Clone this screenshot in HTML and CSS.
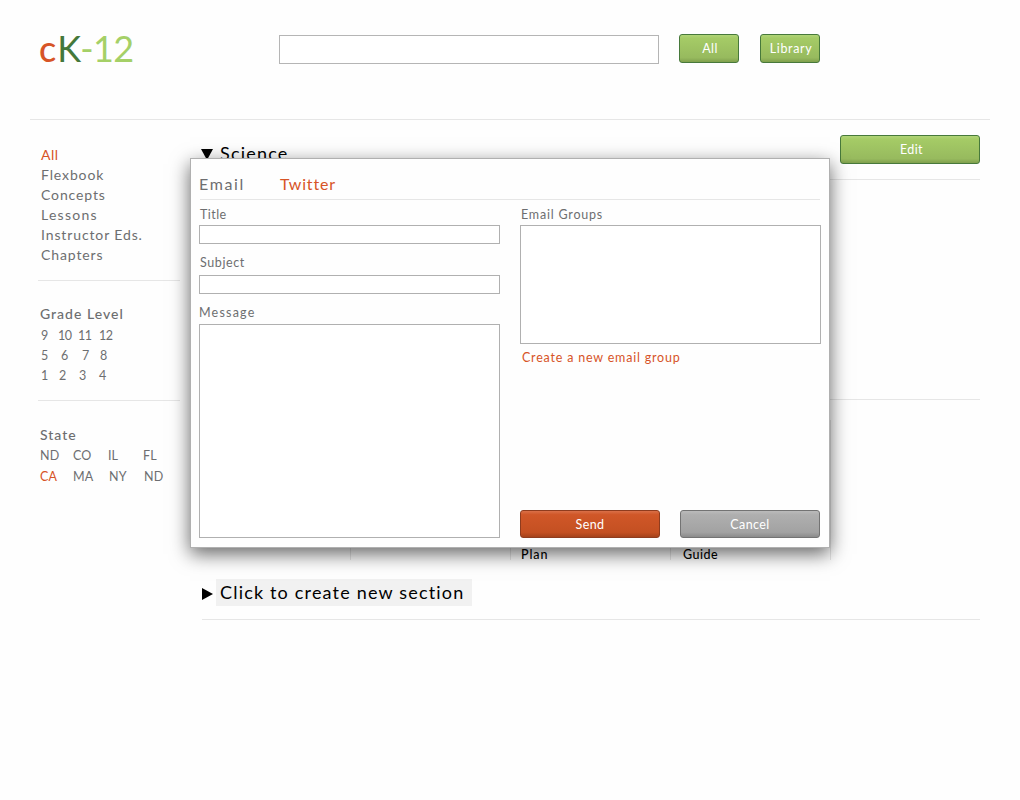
FILE: index.html
```html
<!DOCTYPE html>
<html lang="en">
<head>
<meta charset="utf-8">
<title>cK-12</title>
<link rel="stylesheet" href="styles.css">
</head>
<body>
<header class="header">
  <div class="logo"><span class="logo-c">c</span><span class="logo-k">K</span><span class="logo-num">-12</span></div>
  <input class="search" type="text" aria-label="Search">
  <button class="btn btn-small">All</button>
  <button class="btn btn-small btn-library">Library</button>
</header>
<div class="layout">
  <aside class="sidebar">
    <nav class="types">
      <a class="active">All</a>
      <a>Flexbook</a>
      <a>Concepts</a>
      <a class="wide">Lessons</a>
      <a>Instructor Eds.</a>
      <a>Chapters</a>
    </nav>
    <section class="grades">
      <h3>Grade Level</h3>
      <div class="row row-a"><span>9</span><span>10</span><span>11</span><span>12</span></div>
      <div class="row row-b"><span>5</span><span>6</span><span>7</span><span>8</span></div>
      <div class="row row-c"><span>1</span><span>2</span><span>3</span><span>4</span></div>
    </section>
    <section class="states">
      <h3>State</h3>
      <div class="row"><span>ND</span><span>CO</span><span>IL</span><span>FL</span></div>
      <div class="row row-last"><span class="active">CA</span><span>MA</span><span>NY</span><span>ND</span></div>
    </section>
  </aside>
  <main class="main">
    <div class="section-head">
      <svg class="arrow" width="12" height="11" viewBox="0 0 12 11"><path d="M0 0H12L6 11Z"/></svg>
      <h2>Science</h2>
      <button class="btn btn-edit">Edit</button>
    </div>
    <div class="shelf"></div>
    <div class="books">
      <div class="book"></div>
      <div class="book"></div>
      <div class="book">Plan</div>
      <div class="book">Guide</div>
    </div>
    <div class="new-section">
      <svg class="arrow-right" width="11" height="12" viewBox="0 0 11 12"><path d="M0 0L11 6L0 12Z"/></svg>
      <h2 class="new-title">Click to create new section</h2>
    </div>
  </main>
</div>
<div class="dialog" role="dialog">
  <div class="tabs"><a class="tab-email">Email</a><a class="tab-twitter">Twitter</a></div>
  <div class="form">
    <div class="col">
      <label class="label-title">Title</label>
      <input class="field" type="text" aria-label="Title">
      <label class="label-subject">Subject</label>
      <input class="field" type="text" aria-label="Subject">
      <label class="label-message">Message</label>
      <textarea class="field message" aria-label="Message"></textarea>
    </div>
    <div class="col">
      <label class="label-groups">Email Groups</label>
      <div class="field groups"></div>
      <a class="create">Create a new email group</a>
      <div class="actions">
        <button class="btn btn-send">Send</button>
        <button class="btn btn-cancel">Cancel</button>
      </div>
    </div>
  </div>
</div>
</body>
</html>
```
FILE: styles.css
```css
* { box-sizing: border-box; }
body {
  margin: 0;
  height: 800px;
  overflow: hidden;
  background: #fefefe;
  color: #6d6e70;
  font-family: Lato, "Liberation Sans", sans-serif;
}
h2, h3 { margin: 0; font-weight: 400; }
.header {
  display: flex;
  align-items: flex-start;
  height: 120px;
  margin: 0 30px;
  padding-top: 34px;
  border-bottom: 1px solid #e6e6e6;
}
.logo {
  width: 249px;
  padding-left: 9px;
  margin-top: -8px;
  font-size: 36px;
  line-height: 44px;
  white-space: nowrap;
}
.logo-c { color: #d75427; letter-spacing: 1px; font-weight: 500; }
.logo-k { color: #44783a; letter-spacing: -0.8px; }
.logo-num { color: #a5d067; letter-spacing: -0.7px; }
.search {
  width: 380px;
  height: 29px;
  margin: 0.5px 20px 0 0;
  padding: 0 8px;
  border: 1px solid #b5b5b5;
  background: #fff;
}
.btn {
  height: 29px;
  padding: 1px 0 0;
  border: 1px solid #47793b;
  border-radius: 3px;
  background: linear-gradient(#b0d477 0, #a5cb66 12%, #97ba5e 84%, #80a04d 100%);
  color: #fff;
  font: 400 12.5px/20px Lato, "Liberation Sans", sans-serif;
  letter-spacing: 0.4px;
}
.btn-small { width: 60px; margin-right: 21px; padding-left: 2px; }
.btn-library { margin-right: 0; letter-spacing: 0.65px; }
.layout { display: flex; }
.sidebar { width: 142px; margin-left: 38px; }
.active { color: #d75427; }
.types {
  display: flex;
  flex-direction: column;
  height: 161px;
  padding: 25px 0 0 3px;
  border-bottom: 1px solid #e6e6e6;
  font-size: 14px;
  line-height: 20px;
  letter-spacing: 0.88px;
}
.types .active { letter-spacing: 0.5px; }
.types .wide { letter-spacing: 1.25px; }
.sidebar h3 {
  padding-left: 2px;
  font-size: 14px;
  font-weight: 500;
  line-height: 20px;
  letter-spacing: 1px;
}
.grades { height: 120px; padding-top: 23px; border-bottom: 1px solid #e6e6e6; }
.row {
  display: grid;
  padding-left: 2px;
  grid-template-columns: 33px 35px 35px 30px;
  font-size: 12.5px;
  line-height: 20px;
  letter-spacing: 0.1px;
}
.grades .row { padding-left: 3px; letter-spacing: -0.6px; }
.grades h3 { margin-bottom: 2px; }
.grades .row-a { grid-template-columns: 17px 20px 21px 20px; }
.grades .row-b { grid-template-columns: 20px 21px 18px 20px; }
.grades .row-c { grid-template-columns: 18px 20px 20px 20px; }
.states { padding-top: 24px; }
.states h3 { margin: 0 0 1px; }
.states .row-last { grid-template-columns: 33px 36px 35px 30px; margin-top: 1px; }
.main { width: 778px; margin-left: 22px; color: #000; }
.section-head {
  display: flex;
  height: 60px;
  border-bottom: 1px solid #e6e6e6;
}
.arrow { flex: none; margin: 29px 7px 0 -1px; }
.section-head h2 { flex: 1; padding-top: 21px; font-size: 18px; line-height: 24px; letter-spacing: 1.2px; }
.btn-edit { width: 140px; margin-top: 15px; padding-left: 3px; }
.shelf { height: 220px; border-bottom: 1px solid #e6e6e6; }
.books { display: flex; height: 140px; margin: 20px 0 0 -11px; }
.book {
  display: flex;
  align-items: flex-end;
  width: 160px;
  padding-left: 10px;
  border-right: 1px solid #e6e6e6;
  font-size: 12.5px;
  font-weight: 500;
  line-height: 11px;
  letter-spacing: 0.9px;
}
.book:last-child { padding-left: 12px; letter-spacing: 0.5px; }
.new-section {
  display: flex;
  height: 60px;
  padding-top: 19px;
  border-bottom: 1px solid #e6e6e6;
}
.arrow-right { flex: none; margin: 9px 3px 0 0; }
.new-title {
  width: 256px;
  height: 27px;
  padding-left: 4px;
  background: #f1f1f1;
  font-size: 18px;
  line-height: 26px;
  letter-spacing: 1.18px;
  white-space: nowrap;
}
.dialog {
  position: absolute;
  left: 190px;
  top: 158px;
  width: 640px;
  height: 390px;
  padding: 0 8px;
  border: 1px solid #b0b0b0;
  background: #fefefe;
  box-shadow: 0 6px 18px rgba(0, 0, 0, 0.6);
}
.tabs {
  display: flex;
  height: 41px;
  margin: 0 1px;
  padding-top: 15px;
  border-bottom: 1px solid #e6e6e6;
  font-size: 16px;
  line-height: 20px;
}
.tab-email { width: 79px; margin-left: -1px; letter-spacing: 1.65px; }
.tab-twitter { color: #d75427; letter-spacing: 0.8px; margin-left: 2px; }
.form { display: flex; gap: 20px; }
.col {
  display: flex;
  flex-direction: column;
  width: 301px;
  height: 338px;
  font-size: 12.5px;
  line-height: 20px;
}
.field {
  display: block;
  flex: none;
  width: 301px;
  height: 19px;
  padding: 0 4px;
  border: 1px solid #b0b0b0;
  border-radius: 0;
  background: #fff;
  resize: none;
}
.label-title { height: 25px; padding: 5px 0 0 1px; letter-spacing: 0.45px; }
.label-subject { height: 31px; padding: 9px 0 0 1px; letter-spacing: 0.6px; }
.label-message { height: 30px; padding-top: 9px; letter-spacing: 1.2px; }
.label-groups { height: 25px; padding: 5px 0 0 1px; letter-spacing: 0.8px; }
.message { height: 214px; }
.groups { height: 119px; }
.create { margin-top: 4px; padding-left: 2px; color: #d75427; letter-spacing: 0.8px; }
.actions { display: flex; gap: 20px; margin-top: auto; }
.btn-send, .btn-cancel { width: 140px; height: 28px; }
.btn-send {
  border-color: #8f3c1e;
  background: linear-gradient(#da7048 0, #d05728 14%, #c45022 82%, #a5421b 100%);
}
.btn-cancel {
  border-color: #737373;
  background: linear-gradient(#bbb 0, #afafaf 14%, #a2a2a2 82%, #8b8b8b 100%);
}
```
